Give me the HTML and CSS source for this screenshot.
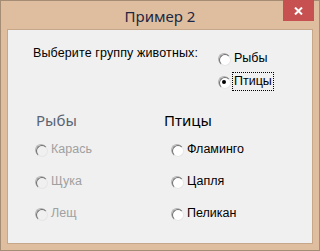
FILE: index.html
```html
<!DOCTYPE html>
<html lang="ru">
<head>
    <meta charset="UTF-8">
    <meta name="viewport" content="width=device-width, initial-scale=1.0">
    <title>Пример 2</title>
    <link rel="stylesheet" href="styles.css">
</head>
<body>
    <div class="window">
        <div class="titlebar">
            <span></span>
            <span class="title">Пример 2</span>
            <span class="close">
                <svg width="9" height="8" viewBox="0 0 9 8"><path d="M1 0.5L8 7.5M8 0.5L1 7.5" stroke="#fff" stroke-width="2"/></svg>
            </span>
        </div>
        <div class="client">
            <div class="top">
                <div class="prompt">Выберите группу животных:</div>
                <div class="group">
                    <div class="opt"><span class="radio"></span><span>Рыбы</span></div>
                    <div class="opt"><span class="radio checked"></span><span class="focus">Птицы</span></div>
                </div>
            </div>
            <div class="lists">
                <div class="col off">
                    <div class="head">Рыбы</div>
                    <div class="opt"><span class="radio"></span><span>Карась</span></div>
                    <div class="opt"><span class="radio"></span><span>Щука</span></div>
                    <div class="opt"><span class="radio"></span><span>Лещ</span></div>
                </div>
                <div class="col">
                    <div class="head">Птицы</div>
                    <div class="opt"><span class="radio"></span><span>Фламинго</span></div>
                    <div class="opt"><span class="radio"></span><span>Цапля</span></div>
                    <div class="opt"><span class="radio"></span><span>Пеликан</span></div>
                </div>
            </div>
        </div>
    </div>
</body>
</html>
```

FILE: styles.css
```css
*{
    padding: 0;
    margin: 0;
    box-sizing: border-box;
}
body{
    font-family: "Liberation Sans", Arial, sans-serif;
    background: #dfbe9f;
}
.window{
    width: 320px;
    height: 251px;
    border: 1px solid #a58c75;
    background: #dfbe9f;
    display: flex;
    flex-direction: column;
}
.titlebar{
    height: 28px;
    display: grid;
    grid-template-columns: 1fr auto 1fr;
}
.title{
    font-family: "Noto Sans", sans-serif;
    font-size: 15px;
    line-height: 30px;
    color: #1e2743;
}
.close{
    justify-self: end;
    align-self: start;
    width: 31px;
    height: 21px;
    margin: -1px 5px 0 0;
    background: #c75050;
    display: flex;
    align-items: center;
    justify-content: center;
}
.client{
    flex: 1;
    margin: 0 6px 6px;
    border: 1px solid #c6a78a;
    background: #f0f0f0;
    font-size: 12.5px;
    color: #000;
}
.top{
    display: flex;
    padding: 16px 0 0 25px;
}
.prompt{
    width: 185px;
    line-height: 15px;
    letter-spacing: 0.12px;
}
.group{
    margin-top: 5px;
    display: flex;
    flex-direction: column;
    gap: 8px;
}
.opt{
    display: flex;
    align-items: center;
    gap: 4px;
    line-height: 15px;
}
.radio{
    position: relative;
    width: 12px;
    height: 12px;
    border-radius: 50%;
    border: 1px solid;
    border-color: #b4b4b4 #fff #fff #b4b4b4;
    flex: none;
}
.radio::before{
    content: "";
    display: block;
    width: 10px;
    height: 10px;
    border-radius: 50%;
    border: 1px solid;
    border-color: #6e6e6e #e6e6e6 #e6e6e6 #6e6e6e;
    background: #fff;
}
.radio.checked::after{
    content: "";
    position: absolute;
    left: 3px;
    top: 3px;
    width: 4px;
    height: 4px;
    border-radius: 50%;
    background: #000;
}
.focus{
    outline: 1px dotted #000;
    outline-offset: 1px;
}
.lists{
    display: grid;
    grid-template-columns: 129px 1fr;
    padding: 22px 0 0 27px;
}
.col{
    display: flex;
    flex-direction: column;
    gap: 17px;
}
.head{
    font-family: "Noto Sans", sans-serif;
    font-size: 15px;
    line-height: 18px;
    margin-bottom: -4px;
}
.col .opt{
    padding-left: 7px;
}
.off .opt{
    padding-left: 0;
    color: #a0a0a0;
}
.off .head{
    padding-left: 1px;
    color: #5a6472;
}
.off .radio::before{
    background: #f0f0f0;
}
```
